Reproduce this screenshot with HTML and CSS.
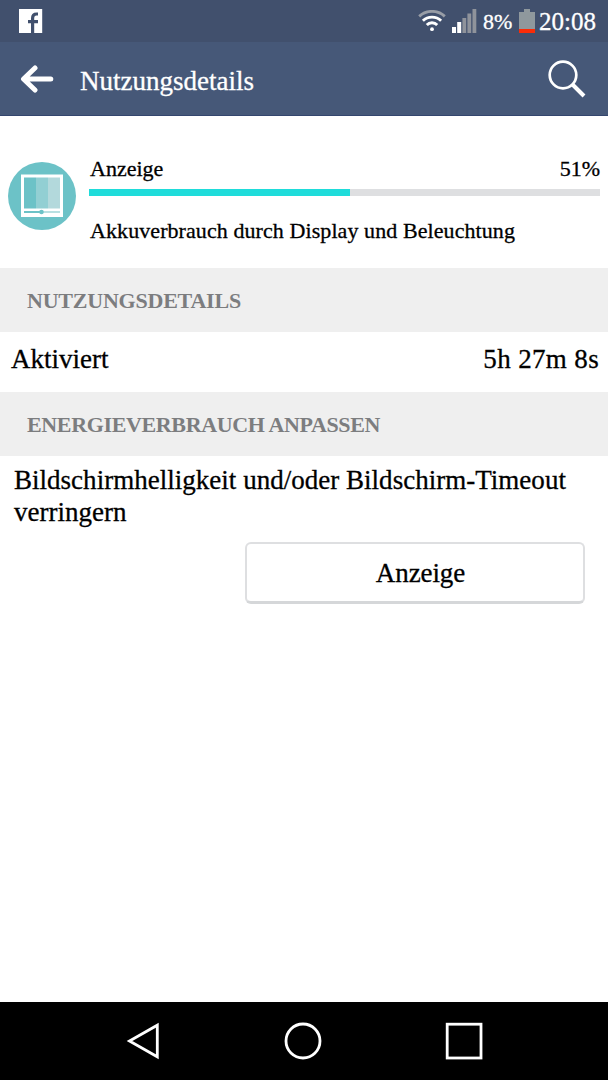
FILE: index.html
```html
<!DOCTYPE html>
<html lang="de">
<head>
    <meta charset="UTF-8">
    <meta name="viewport" content="width=device-width, initial-scale=1.0">
    <title>Nutzungsdetails</title>
    <link rel="stylesheet" href="styles.css">
</head>
<body>
    <div class="status-bar">
        <svg class="facebook" width="24" height="24" viewBox="0 0 24 24">
            <rect width="23.2" height="24" fill="#fff"/>
            <path d="M13.6 24V9.2Q13.6 5 17.6 5H19M9 12.6h10" fill="none" stroke="#41506d" stroke-width="3.2"/>
        </svg>
        <div class="status-icons">
            <svg class="wifi" width="28" height="22" viewBox="0 0 28 22" fill="none" stroke-width="2.9">
                <path d="M1.2 6.4C8.5 -0.3 19.5 -0.3 26.8 6.4" stroke="#989da6"/>
                <path d="M4.9 10.8C10 5.9 18 5.9 23.1 10.8M8.8 15C11.6 12 16.4 12 19.2 15" stroke="#fff"/>
                <circle cx="14" cy="19.2" r="1.9" fill="#fff"/>
            </svg>
            <svg class="signal" width="25" height="24" viewBox="0 0 25 24">
                <path d="M0 18h4v6H0zM5.2 13h4v11h-4z" fill="#fff"/>
                <path d="M10.4 9h3.8v15h-3.8zM15.4 4.5h3.8V24h-3.8zM20.5 0h3.8v24h-3.8z" fill="#8f939b"/>
            </svg>
            <span class="battery-text">8%</span>
            <svg class="battery" width="16" height="24" viewBox="0 0 16 24">
                <path d="M5 0h6v3h5v17H0V3h5z" fill="#8f989d"/>
                <path d="M0 20h16v4H0z" fill="#fa2c08"/>
            </svg>
            <span class="clock">20:08</span>
        </div>
    </div>

    <header class="app-bar">
        <svg class="back" width="34" height="28" viewBox="0 0 34 28" fill="none" stroke="#fff" stroke-width="5" stroke-linecap="round" stroke-linejoin="round">
            <path d="M15 3L3.5 14 15 25M4 14h26.8"/>
        </svg>
        <h1>Nutzungsdetails</h1>
        <svg class="search" width="38" height="38" viewBox="0 0 38 38" fill="none" stroke="#fff">
            <circle cx="15" cy="15" r="13.3" stroke-width="2.7"/>
            <path d="M24.5 24.5L36 36" stroke-width="4"/>
        </svg>
    </header>

    <main>
        <section class="usage">
            <svg class="display-icon" width="68" height="68" viewBox="0 0 68 68">
                <circle cx="34" cy="34" r="34" fill="#6cc2c7"/>
                <rect x="13" y="12.5" width="42" height="42.5" fill="#fff"/>
                <rect x="16" y="15.5" width="12" height="31" fill="#6cc2c7"/>
                <rect x="28" y="15.5" width="12" height="31" fill="#92cfd3"/>
                <rect x="40" y="15.5" width="12" height="31" fill="#b3d9dc"/>
                <path d="M16 50h17" stroke="#6cc2c7" stroke-width="2"/>
                <path d="M33 50h19" stroke="#b9e0e2" stroke-width="2"/>
                <circle cx="33.5" cy="50" r="2.3" fill="#6cc2c7"/>
            </svg>
            <div class="usage-info">
                <div class="usage-title">
                    <span>Anzeige</span>
                    <span>51%</span>
                </div>
                <div class="progress"><div class="progress-fill" style="width: 51.1%"></div></div>
                <p class="description">Akkuverbrauch durch Display und Beleuchtung</p>
            </div>
        </section>

        <h2>NUTZUNGSDETAILS</h2>
        <div class="detail-row">
            <span class="detail-name">Aktiviert</span>
            <span class="detail-value">5h 27m 8s</span>
        </div>

        <h2 class="adjust">ENERGIEVERBRAUCH ANPASSEN</h2>
        <p class="hint">Bildschirmhelligkeit und/oder Bildschirm-Timeout verringern</p>
        <button class="display-button">Anzeige</button>
    </main>

    <nav class="nav-bar">
        <svg width="34" height="38" viewBox="0 0 34 38" fill="none" stroke="#fff" stroke-width="2.8">
            <path d="M31.3 3.2v31.6L3.5 19z"/>
        </svg>
        <svg width="38" height="38" viewBox="0 0 38 38" fill="none" stroke="#fff" stroke-width="2.8">
            <circle cx="19" cy="19" r="17"/>
        </svg>
        <svg width="38" height="38" viewBox="0 0 38 38" fill="none" stroke="#fff" stroke-width="2.8">
            <rect x="2.2" y="2.2" width="33.8" height="33.8"/>
        </svg>
    </nav>
</body>
</html>
```
FILE: styles.css
```css
* {
    box-sizing: border-box;
}

body {
    display: flex;
    flex-direction: column;
    height: 100vh;
    margin: 0;
    background: #fff;
    color: #000;
    font-family: "Liberation Serif", "Times New Roman", serif;
    font-size: 22px;
    -webkit-text-stroke: 0.3px; /* slightly heavier letters */
    overflow: hidden;
}

h1, h2, p {
    margin: 0;
}

svg {
    display: block;
    flex-shrink: 0;
}

.status-bar {
    display: flex;
    justify-content: space-between;
    align-items: center;
    height: 42px;
    padding: 0 12px 0 19px;
    background: #41506d;
    color: #fff;
}

.status-icons {
    display: flex;
    align-items: center;
}

.signal {
    margin-left: 6px;
}

.battery-text {
    width: 30px;
    margin: 2px 0 0 6px;
}

.battery {
    margin-left: 6px;
}

.clock {
    margin: 2px 0 0 4px;
    font-size: 25px;
}

.app-bar {
    display: flex;
    align-items: center;
    height: 74px;
    padding: 0 22px 0 20px;
    background: #465878;
    border-bottom: 1px solid #34466e;
    color: #fff;
}

.app-bar h1 {
    margin: 5px auto 0 26px;
    font-size: 27px;
    font-weight: normal;
}

main {
    flex: 1;
}

.usage {
    display: flex;
    height: 152px;
    padding: 40px 8px 0;
}

.display-icon {
    margin-top: 6px;
}

.usage-info {
    flex: 1;
    margin-left: 13px;
}

.usage-title {
    display: flex;
    justify-content: space-between;
    height: 33px;
    padding-left: 1px;
    line-height: 26px;
}

.progress {
    height: 7px;
    background: #dedfe1;
}

.progress-fill {
    height: 100%;
    background: #1fdcda;
}

.description {
    margin: 22px 0 0 1px;
    line-height: 26px;
    letter-spacing: 0.08px;
    white-space: nowrap;
}

h2 {
    height: 64px;
    padding-left: 27px;
    background: #efefef;
    color: #7c7d7f;
    font-size: 22px;
    line-height: 66px;
    letter-spacing: -0.22px;
    -webkit-text-stroke: 0;
}

.adjust {
    letter-spacing: -0.36px;
}

.detail-row {
    display: flex;
    justify-content: space-between;
    height: 60px;
    padding: 0 9px 0 11px;
    font-size: 27px;
    line-height: 55px;
}

.detail-value {
    letter-spacing: 0.35px;
}

.hint {
    padding: 8px 14px 0;
    font-size: 27px;
    line-height: 32px;
    letter-spacing: 0.02px;
}

.display-button {
    display: block;
    width: 340px;
    height: 62px;
    margin: 14px 23px 0 auto;
    padding: 2px 0 0 11px;
    background: #fff;
    border: 2px solid #dedfe1;
    border-bottom: 3px solid #d5d7d9;
    border-radius: 6px;
    color: #000;
    font-family: inherit;
    font-size: 27px;
    letter-spacing: -0.1px;
}

.nav-bar {
    display: flex;
    justify-content: space-between;
    align-items: center;
    height: 78px;
    padding: 0 125px 0 126px;
    background: #000;
}
```
